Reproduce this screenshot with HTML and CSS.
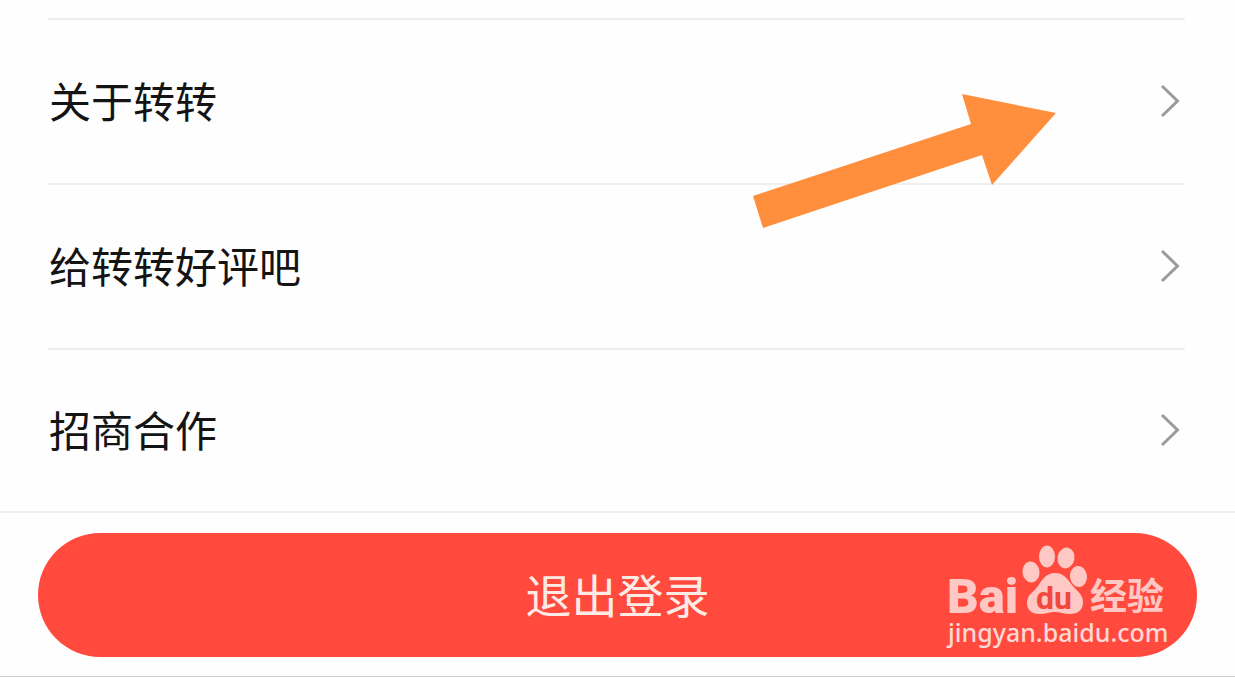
FILE: index.html
```html
<!DOCTYPE html>
<html lang="zh-CN">
<head>
<meta charset="utf-8">
<meta name="viewport" content="width=device-width, initial-scale=1">
<title>设置</title>
<link rel="stylesheet" href="styles.css">
</head>
<body>
<main class="settings">
  <nav class="list">
    <a class="row" href="#about"><span class="label">关于转转</span>
      <svg class="chevron" viewBox="0 0 20 34" aria-hidden="true"><path d="M2 2 17.500 17 2 32"/></svg></a>
    <a class="row" href="#rate"><span class="label">给转转好评吧</span>
      <svg class="chevron" viewBox="0 0 20 34" aria-hidden="true"><path d="M2 2 17.500 17 2 32"/></svg></a>
    <a class="row" href="#business"><span class="label">招商合作</span>
      <svg class="chevron" viewBox="0 0 20 34" aria-hidden="true"><path d="M2 2 17.500 17 2 32"/></svg></a>
    <svg class="arrow" viewBox="0 0 304 136" aria-hidden="true"><path d="M1 104 219 32 210 2 304 21 240 93 230 63 11 136Z"/></svg>
  </nav>
  <footer class="footer">
    <button class="logout" type="button">退出登录</button>
    <svg class="watermark" viewBox="0 0 224 108" role="img" aria-label="Baidu 经验">
      <text class="wm-brand" x="2" y="69">Bai</text>
      <g class="wm-paw">
        <ellipse cx="86" cy="28" rx="8.500" ry="10.500" transform="rotate(-8 86 28)"/>
        <ellipse cx="102" cy="12.500" rx="8" ry="11"/>
        <ellipse cx="121" cy="14" rx="8.500" ry="10.500" transform="rotate(10 121 14)"/>
        <ellipse cx="133.500" cy="32.500" rx="8.500" ry="10.500" transform="rotate(-8 133.500 32.500)"/>
        <path d="M110 29C101 29 97 36 93 42C89 48 82 50 82 59C82 67 88 70 95 70C101 70 105 68 110 68C115 68 119 70 125 70C133 70 138 66 138 58C138 50 131 46 127 41C122 35 119 29 110 29Z"/>
      </g>
      <text class="wm-du" x="91" y="65">du</text>
      <text class="wm-cn" x="145" y="66">经验</text>
      <text class="wm-url" x="3" y="98">jingyan.baidu.com</text>
    </svg>
  </footer>
</main>
</body>
</html>
```
FILE: styles.css
```css
* {
  box-sizing: border-box;
}

body {
  margin: 0;
  background: #fefefe;
  color: #141414;
  font-family: "Noto Sans CJK SC", sans-serif;
}

.settings {
  padding-top: 18px;
}

.list {
  position: relative;
}

.row {
  display: flex;
  align-items: center;
  justify-content: space-between;
  height: 165px;
  margin: 0 50px 0 48px;
  padding: 0 5px 2px 1px;
  border-top: 2px solid #efefef;
  color: inherit;
  font-size: 42px;
  line-height: 64px;
  text-decoration: none;
}

.row:nth-child(3) {
  height: 163px;
}

.label {
  padding-bottom: 2px;
}

.chevron {
  width: 20px;
  height: 34px;
  fill: none;
  stroke: #9b9b9b;
  stroke-width: 3;
}

.arrow {
  position: absolute;
  top: 74px;
  right: 179px;
  width: 304px;
  height: 136px;
  fill: #ff8f3c;
}

.footer {
  position: relative;
  padding: 20px 38px 19px;
  border-top: 2px solid #efefef;
  border-bottom: 1px solid #cfcfcf;
}

.logout {
  display: block;
  width: 100%;
  height: 124px;
  padding: 0 0 4px;
  border: 0;
  border-radius: 62px;
  background: #ff4a3d;
  color: #ffebe6;
  font: 46px/68px "Noto Sans CJK SC", sans-serif;
}

.watermark {
  position: absolute;
  right: 66px;
  bottom: 24px;
  width: 224px;
  height: 108px;
  overflow: visible;
  fill: #ffc8c4;
}

.wm-brand {
  font: 900 49px Roboto, sans-serif;
}

.wm-du {
  fill: #f4473c;
  font: 700 32px Roboto, sans-serif;
}

.wm-cn {
  font: 700 37px "Noto Sans CJK SC", sans-serif;
}

.wm-url {
  fill: #ffd9d6;
  font: 500 25px "Noto Sans", sans-serif;
}
```
